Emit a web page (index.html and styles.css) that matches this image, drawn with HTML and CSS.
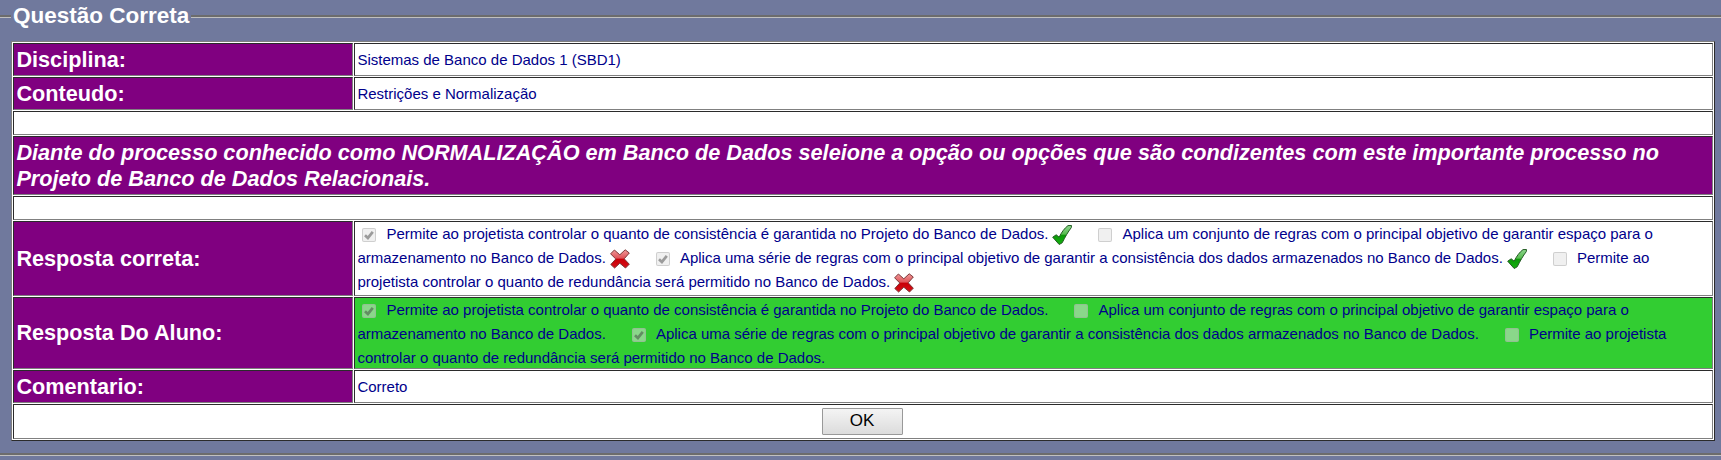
FILE: index.html
```html
<!DOCTYPE html>
<html lang="pt-br">
<head>
<meta charset="utf-8">
<title>Questão Correta</title>
<link rel="stylesheet" href="styles.css">
</head>
<body>
<svg width="0" height="0" class="defs" aria-hidden="true">
  <defs>
    <linearGradient id="green" x1="0" y1="0" x2="0" y2="1"><stop offset="0" stop-color="#8fd68f"/><stop offset=".45" stop-color="#58bd50"/><stop offset=".52" stop-color="#0c9a08"/><stop offset="1" stop-color="#14b010"/></linearGradient>
    <linearGradient id="red" x1="0" y1="0" x2="0" y2="1"><stop offset="0" stop-color="#f09a9a"/><stop offset=".45" stop-color="#e0555a"/><stop offset=".52" stop-color="#c80008"/><stop offset="1" stop-color="#d81018"/></linearGradient>
    <symbol id="right" viewBox="0 0 20 20"><path d="M.7 12.200 4.200 9.800 7.200 12.200C9.200 7.800 12.600 3 16 .6L19.500.5 19.300 2.600C16 6.800 12.900 12.400 10.200 17.800L7.200 19.500Z" fill="url(#green)" stroke="#245c24" stroke-width="1" stroke-linejoin="round"/></symbol>
    <symbol id="wrong" viewBox="0 0 20 20"><path d="M.6 4.800 4.400 1 9.800 5.800 15.200.8 19.300 4 14.200 9.800 19.300 15.200 15.500 19 9.800 14.200 4.600 19 .8 15.500 5.800 10Z" fill="url(#red)" stroke="#7c3838" stroke-width="1" stroke-linejoin="round"/></symbol>
    <symbol id="tick" viewBox="0 0 14 14"><path d="M3 7.200 5.900 9.900 10.800 3.800" fill="none" stroke="#333" stroke-width="2.700"/></symbol>
  </defs>
</svg>
<fieldset class="question">
  <legend>Questão Correta</legend>
  <table class="sheet">
    <colgroup><col class="label-col"><col></colgroup>
    <tr class="single"><th>Disciplina:</th><td>Sistemas de Banco de Dados 1 (SBD1)</td></tr>
    <tr class="single"><th>Conteudo:</th><td>Restrições e Normalização</td></tr>
    <tr class="blank"><td colspan="2"></td></tr>
    <tr class="statement"><th colspan="2">Diante do processo conhecido como NORMALIZAÇÃO em Banco de Dados seleione a opção ou opções que são condizentes com este importante processo no<br>Projeto de Banco de Dados Relacionais.</th></tr>
    <tr class="blank"><td colspan="2"></td></tr>
    <tr class="expected"><th>Resposta correta:</th><td>
      <div class="line"><span class="box first"><svg><use href="#tick"/></svg></span>Permite ao projetista controlar o quanto de consistência é garantida no Projeto do Banco de Dados.<svg class="mark"><use href="#right"/></svg><span class="box"></span>Aplica um conjunto de regras com o principal objetivo de garantir espaço para o</div>
      <div class="line">armazenamento no Banco de Dados.<svg class="mark"><use href="#wrong"/></svg><span class="box"><svg><use href="#tick"/></svg></span>Aplica uma série de regras com o principal objetivo de garantir a consistência dos dados armazenados no Banco de Dados.<svg class="mark"><use href="#right"/></svg><span class="box"></span>Permite ao</div>
      <div class="line">projetista controlar o quanto de redundância será permitido no Banco de Dados.<svg class="mark"><use href="#wrong"/></svg></div>
    </td></tr>
    <tr class="given"><th>Resposta Do Aluno:</th><td>
      <div class="line"><span class="box first"><svg><use href="#tick"/></svg></span>Permite ao projetista controlar o quanto de consistência é garantida no Projeto do Banco de Dados.<span class="box"></span>Aplica um conjunto de regras com o principal objetivo de garantir espaço para o</div>
      <div class="line">armazenamento no Banco de Dados.<span class="box"><svg><use href="#tick"/></svg></span>Aplica uma série de regras com o principal objetivo de garantir a consistência dos dados armazenados no Banco de Dados.<span class="box"></span>Permite ao projetista</div>
      <div class="line">controlar o quanto de redundância será permitido no Banco de Dados.</div>
    </td></tr>
    <tr class="single"><th>Comentario:</th><td>Correto</td></tr>
    <tr class="actions"><td colspan="2"><button type="button">OK</button></td></tr>
  </table>
</fieldset>
</body>
</html>
```

FILE: styles.css
```css
html { overflow: hidden; background: #70799d; }
body { margin: 0; font-family: "Liberation Sans", Arial, sans-serif; font-size: 15px; color: #00008b; }
.defs { position: absolute; }
.question { margin: 3px -10px 0; padding: 0 16px 12px 18px; border: 3px groove #c0c0c0; min-width: 0; box-sizing: border-box; height: 453px; }
.question legend { padding: 0 2px; margin: 0; font-size: 22.5px; line-height: 26px; font-weight: bold; color: #fff; }
.sheet { width: 1704px; margin-top: 12px; table-layout: fixed; border-collapse: separate; border-spacing: 1px; border: 1px solid; border-color: #808080 #2b2b2b #2b2b2b #808080; background: #fff; }
.label-col { width: 340px; }
th, td { box-sizing: border-box; padding: 0 2.4px; border: 1px solid; border-color: #2b2b2b #808080 #808080 #2b2b2b; text-align: left; vertical-align: middle; white-space: nowrap; }
th { background: purple; color: #fff; font-size: 21.66px; line-height: 26px; }
.single > * { height: 33px; }
.blank > * { height: 24px; }
.statement > th { height: 59px; font-style: italic; }
.expected > * { height: 75px; }
.given > * { height: 72px; }
.given > td { background: #32cd32; }
.line { height: 24px; line-height: 24px; }
.expected td .line:first-child { margin-top: -1px; }
.given td .line:last-child { height: 22px; }
.mark { width: 20px; height: 20px; margin: 0 0 0 4px; vertical-align: -6px; }
.box { display: inline-block; box-sizing: border-box; overflow: hidden; width: 14px; height: 14px; margin: 0 10px 0 26px; vertical-align: -3px; border: 1px solid rgba(160,160,160,.4); border-radius: 2px; background: rgba(225,225,225,.5); line-height: 0; }
.box.first { margin-left: 5px; }
.box svg { display: block; width: 14px; height: 14px; margin: -1px; opacity: .45; }
.actions > td { height: 35px; text-align: center; }
button { width: 81px; height: 27px; padding: 0 0 1px; border: 1px solid #999; border-radius: 1px; background: linear-gradient(#f4f4f4, #dcdcdc); font: 17px "Liberation Sans", Arial, sans-serif; color: #000; display: block; margin: 0 auto; transform: translateX(-1px); }
```
